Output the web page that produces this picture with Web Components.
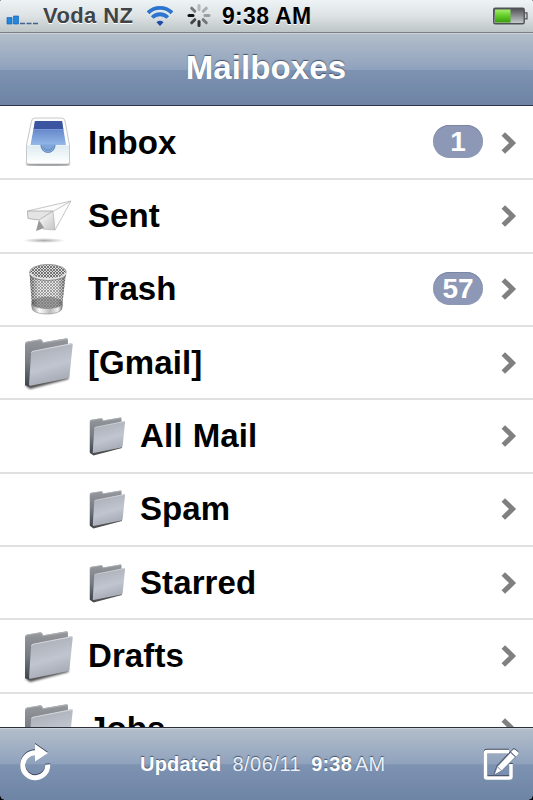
<!DOCTYPE html>
<html lang="en">
<head>
<meta charset="utf-8">
<title>Mailboxes</title>
<style>
  html, body {
    margin: 0;
    height: 100%;
    overflow: hidden;
    background: #fff;
  }
  body {
    font-family: "Liberation Sans", Arial, Helvetica, sans-serif;
    font-weight: bold;
  }
</style>
</head>
<body>
<mail-app>
  <status-bar slot="status">
    <span slot="carrier">Voda NZ</span>
    <span slot="time">9:38 AM</span>
  </status-bar>
  <nav-bar slot="nav">Mailboxes</nav-bar>
  <mailbox-row icon="inbox" count="1">Inbox</mailbox-row>
  <mailbox-row icon="sent">Sent</mailbox-row>
  <mailbox-row icon="trash" count="57">Trash</mailbox-row>
  <mailbox-row icon="folder">[Gmail]</mailbox-row>
  <mailbox-row icon="folder" nested>All Mail</mailbox-row>
  <mailbox-row icon="folder" nested>Spam</mailbox-row>
  <mailbox-row icon="folder" nested>Starred</mailbox-row>
  <mailbox-row icon="folder">Drafts</mailbox-row>
  <mailbox-row icon="folder">Jobs</mailbox-row>
  <tool-bar slot="tools">
    <span slot="label">Updated</span>
    <span slot="date">8/06/11</span>
    <span slot="time">9:38</span>
    <span slot="period">AM</span>
  </tool-bar>
</mail-app>

<script>
const ICONS = {
  inbox: `
    <svg viewBox="0 1 50 56">
      <defs>
        <linearGradient id="well" x1="0" y1="0" x2="0" y2="1">
          <stop offset="0" stop-color="#4f71b8"/><stop offset=".4" stop-color="#6a8ccd"/><stop offset="1" stop-color="#94b8e8"/>
        </linearGradient>
        <linearGradient id="front" x1="0" y1="0" x2="0" y2="1">
          <stop offset="0" stop-color="#dcebf1"/><stop offset="1" stop-color="#fff"/>
        </linearGradient>
        <filter id="soft"><feGaussianBlur stdDeviation=".9"/></filter>
      </defs>
      <path d="M3 48h42v3q-21 1-42 0z" fill="#555" filter="url(#soft)"/>
      <path d="M11 4h26.500q3 0 3.500 3l4.500 24v17q0 2-2 2h-39q-2 0-2-2v-17l5-24q.5-3 3.500-3z" fill="#fdfdfd" stroke="#c5c8cc"/>
      <path d="M11 7h27l4 24h-35.500z" fill="url(#well)"/>
      <path d="M11 7h27l1.300 8.500h-29.700z" fill="#3c55a0"/>
      <path d="M9.600 15.500h29.700" stroke="#86a5de" stroke-width=".8"/>
      <path d="M3 31.500h12.500q1 0 1.500 2c1 7 13 7 14 0q.5-2 1.500-2h12.500v15.500q0 2-2 2h-38q-2 0-2-2z" fill="url(#front)"/>
      <path d="M16.500 30.500c0 11 15 11 15 0z" fill="#7fa6d8"/>
      <path d="M17 31c.5 10 13.500 10 14 0M19 33c2 4 8 4 10 0" fill="none" stroke="#5f82b4" stroke-width=".8"/>
    </svg>`,
  sent: `
    <svg viewBox="-1 -2 50 56">
      <defs>
        <linearGradient id="wing" x1="0" y1="0" x2="1" y2="1">
          <stop offset="0" stop-color="#fff"/><stop offset="1" stop-color="#c4c4c4"/>
        </linearGradient>
        <radialGradient id="ground">
          <stop offset="0" stop-color="#aaa"/><stop offset="1" stop-color="#aaa" stop-opacity="0"/>
        </radialGradient>
      </defs>
      <ellipse cx="19" cy="50.500" rx="21" ry="2.500" fill="url(#ground)"/>
      <path d="M2.500 20L46 11 30 40 18 39 14 30 3 28z" fill="#fcfcfc"/>
      <path d="M2.500 21L28 21 14 30 3 28.500z" fill="#e4e4e4"/>
      <path d="M14 29L28 21.500 30 40 18 39z" fill="url(#wing)"/>
      <path d="M11 41L14 30 19 38z" fill="#999"/>
      <path d="M2.500 21L46 11 30 40 18 39M46 11L28 21.500 30 40" fill="none" stroke="#b8b8b8" stroke-width=".8"/>
      <path d="M2.500 21L28 21 14 30 3 28.500z" fill="none" stroke="#a4a4a4" stroke-width=".8"/>
    </svg>`,
  trash: `
    <svg viewBox="0 0 50 56">
      <defs>
        <pattern id="mesh" width="3" height="3" patternUnits="userSpaceOnUse">
          <rect width="3" height="3" fill="#dcdcdc"/>
          <path d="M0 0L3 3M3 0L0 3" stroke="#555" stroke-width=".75"/>
        </pattern>
        <linearGradient id="metal">
          <stop offset="0" stop-color="#888"/><stop offset=".25" stop-color="#fff"/>
          <stop offset=".6" stop-color="#bbb"/><stop offset=".85" stop-color="#f2f2f2"/><stop offset="1" stop-color="#777"/>
        </linearGradient>
        <linearGradient id="shade">
          <stop offset="0" stop-color="#333" stop-opacity=".45"/><stop offset=".25" stop-color="#fff" stop-opacity=".3"/>
          <stop offset=".75" stop-color="#fff" stop-opacity=".3"/><stop offset="1" stop-color="#333" stop-opacity=".45"/>
        </linearGradient>
      </defs>
      <path d="M5.500 11L8 46c2 8 28 8 30 0L42 11z" fill="url(#mesh)"/>
      <path d="M7.500 41c4-7 27-7 31 0l-.5 5c-4 5-26 5-30 0z" fill="#333" opacity=".62"/>
      <path d="M5.500 11L8 46c2 8 28 8 30 0L42 11z" fill="url(#shade)"/>
      <path d="M7.500 43c4 6 27 6 31 0l-.7 5.500c-4 6-26 6-29.500 0z" fill="url(#metal)" stroke="#888" stroke-width=".6"/>
      <ellipse cx="24" cy="11" rx="18" ry="7.500" fill="url(#mesh)" stroke="#999" stroke-width="1.200"/>
      <path d="M6 12c3 8 33 8 36 0" fill="none" stroke="#e4e4e4" stroke-width="1.800"/>
      <path d="M6 13.500c3 8 33 8 36 0" fill="none" stroke="#777" stroke-width=".7"/>
    </svg>`,
  folder: `
    <svg viewBox="0 0 49.500 53.500" preserveAspectRatio="none">
      <defs>
        <linearGradient id="back" x1="0" y1="0" x2="0" y2="1">
          <stop offset="0" stop-color="#969a9e"/><stop offset=".5" stop-color="#777b82"/><stop offset="1" stop-color="#3d4248"/>
        </linearGradient>
        <linearGradient id="face" x1=".3" y1="0" x2=".6" y2="1">
          <stop offset="0" stop-color="#a9adb6"/><stop offset=".55" stop-color="#c1c5cf"/><stop offset="1" stop-color="#a1a5af"/>
        </linearGradient>
        <filter id="soft" x="-10%" y="-10%" width="120%" height="120%"><feGaussianBlur stdDeviation=".9"/></filter>
      </defs>
      <path d="M1 48L6 51.500 44 42V39L6 47z" fill="#222" opacity=".8" filter="url(#soft)"/>
      <path d="M1 8.500q0-2 2-2.300L16.500 4q1.500 0 1.800 1.500L19 7 42 3.200q1.500 0 1.500 1.500V18L5 49.500 1 48z" fill="url(#back)"/>
      <path d="M1.500 9q0-2 2-2.300L16.500 4.500l2 3L43 3.700" fill="none" stroke="#b4b7ba" stroke-width=".8"/>
      <path d="M7 17.500q0-1.700 1.700-2L46.500 8q2-.3 1.700 1.500L45 39.500q-.2 1.500-1.700 1.800L6.300 48.500q-1.400.2-1.300-1.200z" fill="url(#face)"/>
      <path d="M7.500 17q0-1.200 1.500-1.500L47.500 8.300" fill="none" stroke="#d9dbdf" stroke-width=".9"/>
    </svg>`
};

class MailApp extends HTMLElement {
  constructor() {
    super();
    this.attachShadow({ mode: 'open' });
    this.shadowRoot.innerHTML = `
      <style>
        :host {
          display: grid;
          grid-template-rows: 33px 73px minmax(0, 1fr) 73px;
          height: 100vh;
          overflow: hidden;
        }
        main {
          overflow: hidden;
          padding-top: 1px;
          background: #fff;
        }
      </style>
      <slot name="status"></slot>
      <slot name="nav"></slot>
      <main><slot></slot></main>
      <slot name="tools"></slot>
    `;
  }
}

class StatusBar extends HTMLElement {
  constructor() {
    super();
    this.attachShadow({ mode: 'open' });
    this.shadowRoot.innerHTML = `
      <style>
        :host {
          display: flex;
          align-items: center;
          box-sizing: border-box;
          padding: 0 5px 1px 6px;
          border-bottom: 1px solid #7b7f84;
          background:
            radial-gradient(circle at 100% 100%, transparent 3px, #444 4px) 0 0 / 3px 3px no-repeat,
            radial-gradient(circle at 0 100%, transparent 3px, #444 4px) 100% 0 / 3px 3px no-repeat,
            linear-gradient(#eef3f6, #dde2e4 50%, #bdc5c7);
          white-space: nowrap;
        }
        svg { display: block; flex: none; }
        .carrier {
          width: 104px;
          margin-left: 4px;
          font-size: 22px;
          color: #414446;
          letter-spacing: .4px;
          text-shadow: 0 1px #fff;
        }
        .time {
          flex: 1;
          margin-left: 11px;
          padding-top: 1px;
          font-size: 23px;
          letter-spacing: .3px;
          color: #000;
          text-shadow: 0 1px #fff;
        }
      </style>
      <svg width="33" height="32" viewBox="0 0 33 32">
        <path d="M1 17.500h5v6.500H1zM7.500 16h5v8h-5z" fill="#2385dd" stroke="#1767b4" stroke-width=".7"/>
        <path d="M14 23.500h5M20.500 23.500h5M27 23.500h5" stroke="#45618c" stroke-width="1.500"/>
      </svg>
      <span class="carrier"><slot name="carrier"></slot></span>
      <svg width="26" height="32" viewBox="0 0 26 32">
        <g fill="none" stroke="#2b74cf" stroke-width="3.800">
          <path d="M1 14.300a17 17 0 0 1 24 0" transform="translate(0 -1.500)"/>
          <path d="M5.200 18a11 11 0 0 1 15.600 0" transform="translate(0 -.5)"/>
        </g>
        <path d="M9.500 22.300a5 5 0 0 1 7 0L13 26z" fill="#1e4da6"/>
      </svg>
      <svg width="26" height="32" viewBox="-14 -15.500 26 32" style="margin-left:12px">
        <g stroke-width="3" stroke-linecap="round">
          <path d="M0-6V-10" stroke="#b5b8b9"/>
          <path d="M4.200-4.200L7.300-7.300" stroke="#aaadae"/>
          <path d="M6 0H10" stroke="#9b9e9f"/>
          <path d="M4.200 4.200L7.300 7.300" stroke="#747677"/>
          <path d="M0 6V10" stroke="#333"/>
          <path d="M-4.200 4.200L-7.300 7.300" stroke="#444"/>
          <path d="M-6 0H-10" stroke="#111"/>
          <path d="M-4.200-4.200L-7.300-7.300" stroke="#777"/>
        </g>
      </svg>
      <span class="time"><slot name="time"></slot></span>
      <svg width="36" height="32" viewBox="0 0 36 32">
        <defs>
          <linearGradient id="charge" x1="0" y1="0" x2="0" y2="1">
            <stop offset="0" stop-color="#a5ee6b"/><stop offset=".45" stop-color="#66cf2c"/><stop offset="1" stop-color="#389d0b"/>
          </linearGradient>
          <linearGradient id="empty" x1="0" y1="0" x2="0" y2="1">
            <stop offset="0" stop-color="#4c4e52"/><stop offset="1" stop-color="#cccfd1"/>
          </linearGradient>
        </defs>
        <rect x="1.700" y="8.200" width="30.500" height="15.500" rx="1.500" fill="url(#empty)" stroke="#505356" stroke-width="1.400"/>
        <rect x="3" y="9.500" width="15.500" height="13" fill="url(#charge)"/>
        <path d="M33 12.800h2v6h-2" fill="#ccc" stroke="#505356" stroke-width="1.200"/>
      </svg>
    `;
  }
}

class NavBar extends HTMLElement {
  constructor() {
    super();
    this.attachShadow({ mode: 'open' });
    this.shadowRoot.innerHTML = `
      <style>
        :host {
          display: flex;
          align-items: center;
          justify-content: center;
          box-sizing: border-box;
          padding: 0 1px 3px 0;
          border-top: 1px solid #cbd2dc;
          border-bottom: 1px solid #2d3648;
          background: linear-gradient(#b3beca, #8fa2bd 50%, #7e93b2 51%, #6e84a4);
          color: #fff;
          font-size: 33px;
          letter-spacing: .1px;
          text-shadow: 0 -1px 1px #47536a;
        }
      </style>
      <slot></slot>
    `;
  }
}

class MailboxRow extends HTMLElement {
  constructor() {
    super();
    this.attachShadow({ mode: 'open' });
  }

  connectedCallback() {
    this.render();
  }

  render() {
    const count = this.getAttribute('count');

    this.shadowRoot.innerHTML = `
      <style>
        :host {
          display: flex;
          align-items: center;
          box-sizing: border-box;
          height: 73.33px;
          padding: 0 16px 0 24px;
          border-bottom: 2px solid #e0e0e0;
          color: #000;
          font-size: 33px;
        }
        :host([nested]) { padding-left: 89px; }
        .icon { flex: none; width: 50px; height: 56px; }
        :host([nested]) .icon { width: 37px; height: 42px; }
        .icon svg { display: block; width: 100%; height: 100%; }
        .label {
          flex: 1;
          margin-left: 14px;
          letter-spacing: .1px;
          white-space: nowrap;
        }
        :host([nested]) .label { word-spacing: 1px; }
        .badge {
          width: 50px;
          margin: -2px 18px 0 0;
          border-radius: 17px;
          background: #8c98b6;
          box-shadow: inset 0 1px #7b86a2;
          color: #fff;
          font-size: 28px;
          line-height: 33px;
          text-align: center;
        }
        .chevron { flex: none; display: block; }
      </style>
      <span class="icon">${ICONS[this.getAttribute('icon')]}</span>
      <span class="label"><slot></slot></span>
      ${count ? `<span class="badge">${count}</span>` : ''}
      <svg class="chevron" width="16" height="22" viewBox="0 0 16 22">
        <path d="M2.300 2L11.500 11 2.300 20" fill="none" stroke="#808080" stroke-width="5"/>
      </svg>
    `;
  }
}

class ToolBar extends HTMLElement {
  constructor() {
    super();
    this.attachShadow({ mode: 'open' });
    this.shadowRoot.innerHTML = `
      <style>
        :host {
          display: flex;
          align-items: center;
          box-sizing: border-box;
          padding: 0 14px 0 18px;
          border-top: 1px solid #2b303a;
          background:
            radial-gradient(circle at 100% 0, transparent 3px, #000 4px) 0 100% / 4px 4px no-repeat,
            radial-gradient(circle at 0 0, transparent 3px, #000 4px) 100% 100% / 4px 4px no-repeat,
            linear-gradient(#b3beca, #8fa2bd 50%, #7e93b2 51%, #6e84a4);
          box-shadow: inset 0 1px #cbd2dc;
          color: #fff;
          font-size: 20px;
          text-shadow: 0 -1px 1px #47536a;
        }
        svg {
          display: block;
          filter: drop-shadow(0 -1px .3px #3c475c);
        }
        .refresh { margin-bottom: 4px; }
        .compose { margin-top: 1px; }
        .status {
          display: flex;
          flex: 1;
          margin-left: 88px;
          letter-spacing: .2px;
          white-space: nowrap;
        }
        .light { font-weight: normal; color: #e9f0fa; }
        .date { margin: 0 10px 0 11px; letter-spacing: .5px; }
        .period { margin-left: 3px; }
      </style>
      <svg class="refresh" width="34" height="40" viewBox="0 0 34 40">
        <path d="M29.700 22.500A12.500 12.500 0 1 1 17.200 10.800" fill="none" stroke="#fff" stroke-width="5"/>
        <path d="M17 2L30 11 17 19.500z" fill="#fff"/>
      </svg>
      <div class="status">
        <slot name="label"></slot>
        <span class="light date"><slot name="date"></slot></span>
        <slot name="time"></slot>
        <span class="light period"><slot name="period"></slot></span>
      </div>
      <svg class="compose" width="36" height="36" viewBox="0 0 36 36">
        <path d="M26 4.500H4q-1.500 0-1.500 1.500V29.500q0 1.500 1.500 1.500H26.500q1.500 0 1.500-1.500V17" fill="none" stroke="#fff" stroke-width="3.600"/>
        <path d="M11 28L14.200 19.500 27.500 5.500 32.500 10 18.600 24z" fill="#fff" stroke="#5f718d" stroke-width=".8"/>
        <path d="M28 4.900L30 2.700q1-1 2.200 0L35 5q1 1 0 2.200L33 9.500z" fill="#fff"/>
        <path d="M14.500 19.800L18.300 23.600" stroke="#5f718d" stroke-width=".8"/>
      </svg>
    `;
  }
}

customElements.define('mail-app', MailApp);
customElements.define('status-bar', StatusBar);
customElements.define('nav-bar', NavBar);
customElements.define('mailbox-row', MailboxRow);
customElements.define('tool-bar', ToolBar);
</script>
</body>
</html>
